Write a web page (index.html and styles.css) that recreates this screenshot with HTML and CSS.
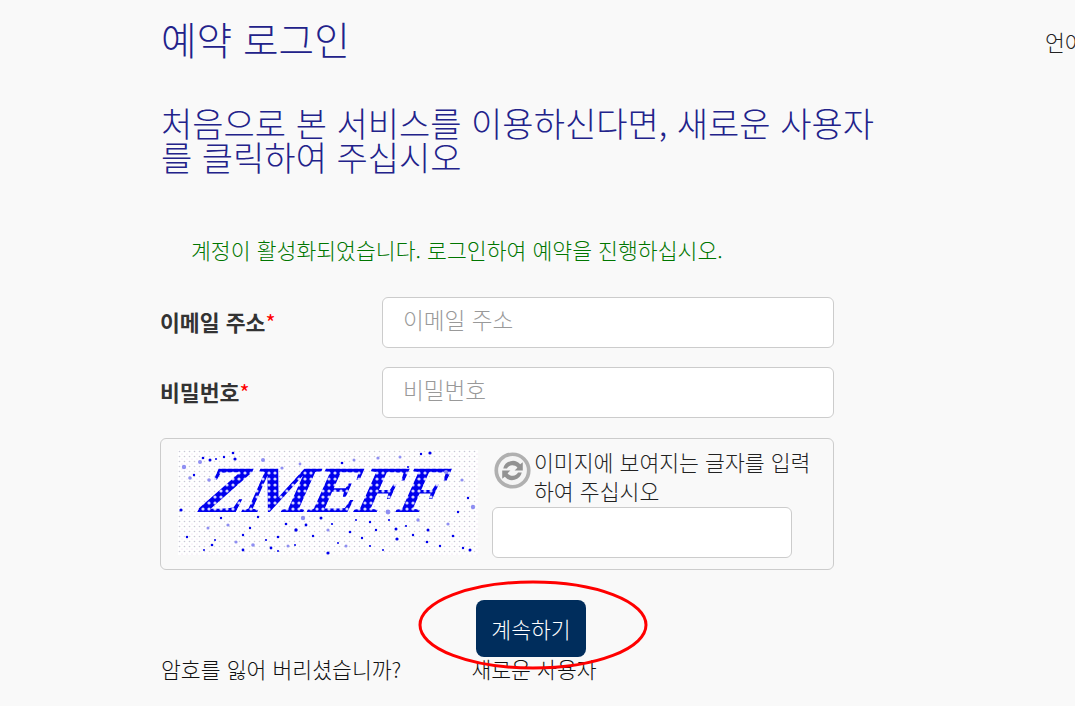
FILE: index.html
```html
<!DOCTYPE html>
<html lang="ko">
<head>
  <meta charset="UTF-8">
  <title>예약 로그인</title>
  <link rel="stylesheet" href="styles.css">
</head>
<body>

<div class="page">
  <!-- Header -->
  <div class="top">
    <h1>예약 로그인</h1>
    <div class="lang">언어</div>
  </div>

  <h2>처음으로 본 서비스를 이용하신다면, 새로운 사용자를 클릭하여 주십시오</h2>

  <p class="notice">계정이 활성화되었습니다. 로그인하여 예약을 진행하십시오.</p>

  <!-- Login form -->
  <form class="login">
    <div class="row">
      <label>이메일 주소<span class="req">*</span></label>
      <input type="text" placeholder="이메일 주소">
    </div>
    <div class="row">
      <label>비밀번호<span class="req">*</span></label>
      <input type="password" placeholder="비밀번호">
    </div>

    <div class="captcha">
      <svg class="captcha-img" viewBox="0 0 300 105" width="300" height="105">
        <defs>
          <pattern id="dots" width="5" height="5" patternUnits="userSpaceOnUse">
            <circle cx="1.5" cy="1.5" r="0.8" fill="#c9c9d6"/>
            <circle cx="4" cy="4" r="0.6" fill="#e2cfe6"/>
          </pattern>
          <pattern id="holes" width="6" height="6" patternUnits="userSpaceOnUse" patternTransform="skewX(24)">
            <rect width="6" height="6" fill="#0000ee"/>
            <circle cx="3" cy="3" r="1.6" fill="#d4d4ff"/>
          </pattern>
        </defs>
        <rect width="300" height="105" fill="#fff"/>
        <rect width="300" height="105" fill="url(#dots)"/>
        <text class="captcha-text" transform="translate(16 62) skewX(-24)" fill="url(#holes)" textLength="242" lengthAdjust="spacingAndGlyphs">ZMEFF</text>
        <g fill="#0000ee">
          <circle cx="32" cy="10" r="1.5"/><circle cx="57" cy="9" r="1.6"/><circle cx="55" cy="3" r="1.3"/>
          <circle cx="3" cy="60" r="1.6"/><circle cx="16" cy="25" r="1.2"/><circle cx="38" cy="9" r="1"/>
          <circle cx="164" cy="13" r="1.3"/><circle cx="252" cy="3" r="1.6"/><circle cx="230" cy="17" r="1"/>
          <circle cx="290" cy="48" r="1.2"/><circle cx="43" cy="68" r="1.2"/><circle cx="80" cy="67" r="1.2"/>
          <circle cx="118" cy="80" r="1.7"/><circle cx="100" cy="87" r="1.3"/><circle cx="34" cy="95" r="1.3"/>
          <circle cx="37" cy="90" r="1"/><circle cx="65" cy="85" r="1.2"/><circle cx="65" cy="100" r="1.4"/>
          <circle cx="93" cy="98" r="1.4"/><circle cx="100" cy="101" r="1"/><circle cx="117" cy="95" r="1"/>
          <circle cx="150" cy="103" r="1.6"/><circle cx="154" cy="74" r="1.1"/><circle cx="184" cy="88" r="1.2"/>
          <circle cx="192" cy="72" r="1.2"/><circle cx="198" cy="80" r="1.2"/><circle cx="218" cy="79" r="1.5"/>
          <circle cx="235" cy="85" r="1.2"/><circle cx="219" cy="89" r="1.6"/><circle cx="249" cy="92" r="1.3"/>
          <circle cx="250" cy="80" r="1.5"/><circle cx="275" cy="86" r="1.3"/><circle cx="292" cy="100" r="1.5"/>
          <circle cx="160" cy="93" r="1"/><circle cx="205" cy="100" r="1"/><circle cx="128" cy="75" r="1.4"/>
          <circle cx="9" cy="87" r="1.2"/><circle cx="26" cy="100" r="1"/><circle cx="280" cy="62" r="1.2"/>
          <circle cx="211" cy="70" r="1.1"/><circle cx="143" cy="68" r="1.5"/><circle cx="178" cy="70" r="1"/>
          <circle cx="25" cy="8" r="1.3"/><circle cx="46" cy="7" r="1.2"/><circle cx="243" cy="4" r="1.2"/>
          <circle cx="108" cy="74" r="1.3"/><circle cx="172" cy="82" r="1.3"/><circle cx="228" cy="76" r="1.1"/>
          <circle cx="262" cy="96" r="1.2"/><circle cx="285" cy="98" r="1.2"/><circle cx="72" cy="78" r="1.2"/>
          <circle cx="88" cy="90" r="1.1"/><circle cx="135" cy="86" r="1.2"/><circle cx="192" cy="96" r="1.1"/>
        </g>
        <g fill="#8f8ff2">
          <circle cx="6" cy="17" r="2.2"/><circle cx="22" cy="12" r="2"/><circle cx="85" cy="10" r="2"/>
          <circle cx="104" cy="18" r="1.6"/><circle cx="125" cy="68" r="2.2"/><circle cx="210" cy="62" r="2.4"/>
          <circle cx="295" cy="57" r="2.2"/><circle cx="268" cy="22" r="2"/><circle cx="50" cy="75" r="1.6"/>
          <circle cx="200" cy="8" r="1.6"/><circle cx="150" cy="80" r="1.6"/><circle cx="75" cy="95" r="1.8"/>
          <circle cx="12" cy="28" r="1.8"/><circle cx="31" cy="30" r="1.8"/><circle cx="122" cy="14" r="1.4"/>
          <circle cx="176" cy="10" r="1.5"/><circle cx="222" cy="7" r="1.5"/><circle cx="284" cy="30" r="1.6"/>
          <circle cx="30" cy="78" r="1.5"/><circle cx="58" cy="92" r="1.6"/><circle cx="110" cy="96" r="1.5"/>
          <circle cx="168" cy="96" r="1.5"/><circle cx="240" cy="70" r="1.7"/><circle cx="270" cy="74" r="1.6"/>
        </g>
      </svg>
      <div class="captcha-side">
        <div class="captcha-label">
          <svg class="refresh" viewBox="0 0 36 36" width="37" height="37">
            <circle cx="18" cy="18" r="15.8" fill="#f4f4f4" stroke="#b0b0b0" stroke-width="3.6"/>
            <path d="M9 16a9.5 9.5 0 0 1 16.5-4l2.5-2v8h-8l2.8-2.6A6 6 0 0 0 12.6 16z" fill="#929292"/>
            <path d="M27 20a9.5 9.5 0 0 1-16.5 4L8 26v-8h8l-2.8 2.6A6 6 0 0 0 23.4 20z" fill="#929292"/>
          </svg>
          <span>이미지에 보여지는 글자를 입력하여 주십시오</span>
        </div>
        <input type="text" class="captcha-input">
      </div>
    </div>

    <div class="submit">
      <button type="button">계속하기</button>
      <svg class="circle" viewBox="0 0 230 90" width="230" height="90">
        <ellipse cx="115" cy="45" rx="113" ry="43" fill="none" stroke="#ff0000" stroke-width="3"/>
      </svg>
    </div>

    <div class="links">
      <a href="#">암호를 잃어 버리셨습니까?</a>
      <a href="#">새로운 사용자</a>
    </div>
  </form>
</div>

</body>
</html>
```

FILE: styles.css
```css
* {
  box-sizing: border-box;
}
html, body {
  height: 100%;
  overflow: hidden;
}
body {
  margin: 0;
  background: #f9f9f9;
  color: #222;
  font-family: "Noto Sans CJK KR", "Liberation Sans", sans-serif;
  font-size: 21.6px;
  font-weight: 300;
}
.page {
  padding: 0 0 0 160px;
  width: 1075px;
}
.top {
  display: flex;
  justify-content: space-between;
  height: 87px;
}
h1 {
  margin: 16px 0 0 1px;
  font-size: 38.7px;
  line-height: 44px;
  font-weight: 300;
  color: #22228a;
}
.lang {
  width: 30px;
  margin-top: 26px;
  white-space: nowrap;
  overflow: hidden;
}
h2 {
  width: 725px;
  margin: 19px 0 0 1px;
  font-size: 34px;
  line-height: 34px;
  font-weight: 300;
  color: #22228a;
  word-break: break-all;
}
.notice {
  margin: 63px 0 0 31px;
  line-height: 26px;
  color: #007600;
}
.login {
  width: 674px;
  margin-top: 34px;
}
.row {
  display: flex;
  align-items: center;
  height: 51px;
  margin-bottom: 19px;
}
.row:nth-child(2) {
  margin-bottom: 20px;
}
.row label {
  width: 222px;
  padding-bottom: 3px;
  color: #333;
  font-weight: 700;
}
.req {
  color: #f00;
  font-weight: 400;
}
.row input {
  width: 452px;
}
input {
  height: 51px;
  padding: 0 20px 6px;
  background: #fff;
  border: 1px solid #ccc;
  border-radius: 6px;
  font: inherit;
  font-size: 22.6px;
}
input::placeholder {
  color: #999;
}
.captcha {
  display: flex;
  height: 132px;
  padding: 11px 0 0 17px;
  border: 1px solid #ccc;
  border-radius: 6px;
}
.captcha-side {
  width: 320px;
  margin-left: 14px;
}
.captcha-label {
  display: flex;
  line-height: 29px;
  padding-left: 2px;
  margin-top: -3px;
}
.refresh {
  flex: none;
  margin: 5px 3px 0 0;
}
.captcha-input {
  display: block;
  width: 300px;
  height: 51px;
  margin-top: 2px;
}
.captcha-text {
  font-family: "Liberation Serif", serif;
  font-size: 66px;
  font-weight: 700;
}
.submit {
  position: relative;
  display: flex;
  justify-content: center;
  margin-top: 30px;
  padding-left: 68px;
}
button {
  width: 110px;
  height: 57px;
  padding-bottom: 2px;
  background: #002d5c;
  color: #fff;
  border: 0;
  border-radius: 8px;
  font: inherit;
}
.circle {
  position: absolute;
  left: 258px;
  top: -20px;
}
.links {
  display: flex;
  gap: 70px;
  line-height: 26px;
  margin-top: -1px;
}
.links a {
  color: #111;
  text-decoration: none;
}
.links a:first-child {
  margin-left: 1px;
}
```
